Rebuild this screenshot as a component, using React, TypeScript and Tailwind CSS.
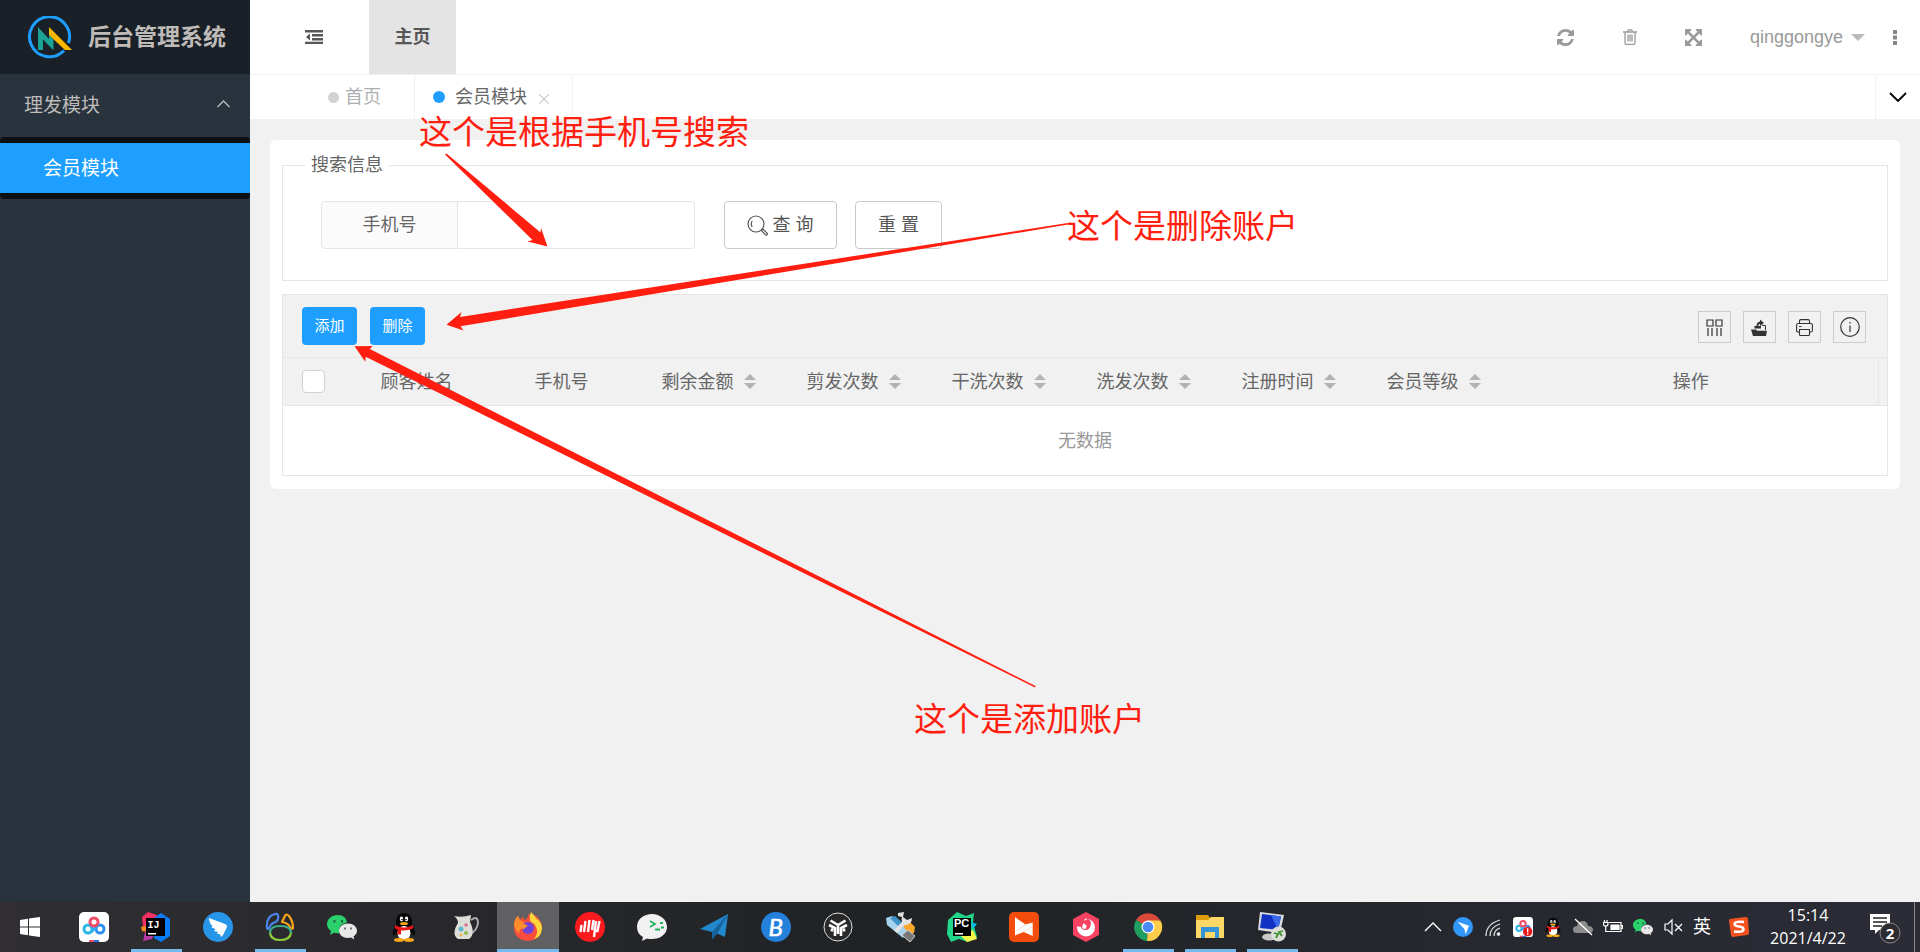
import type { ReactNode } from "react";

const columns = [
  { title: "顾客姓名", sortable: false },
  { title: "手机号", sortable: false },
  { title: "剩余金额", sortable: true },
  { title: "剪发次数", sortable: true },
  { title: "干洗次数", sortable: true },
  { title: "洗发次数", sortable: true },
  { title: "注册时间", sortable: true },
  { title: "会员等级", sortable: true },
];

function Logo() {
  return (
    <svg className="h-11 w-[46px] shrink-0" viewBox="0 0 46 44" fill="none">
      <path d="M42.5 27A20 20 0 1 0 38 34.5" stroke="#1e9fff" strokeWidth="3" />
      <path d="M12 11l11 12v-4l4.500 4.500v11L17 23.500v10.500h-5z" fill="#1aa294" />
      <path d="M23 11l23 23h-7L23 19z" fill="#ffb800" />
    </svg>
  );
}

function OutdentIcon() {
  return (
    <svg width="18" height="14" viewBox="0 0 18 14" fill="#565656">
      <path d="M0 0h18v2.500H0zM7 4h11v2.500H7zM7 8h11v2.500H7zM0 11.700h18V14H0zM5 3.500v7L1 7z" />
    </svg>
  );
}

function RefreshIcon() {
  return (
    <svg width="17" height="17" viewBox="0 0 1536 1536" fill="#999">
      <path d="M1511 928q0 5-1 7-64 268-268 434.5t-478 166.5q-146 0-282.500-55t-243.500-157l-129 129q-19 19-45 19t-45-19-19-45v-448q0-26 19-45t45-19h448q26 0 45 19t19 45-19 45l-137 137q71 66 161 102t187 36q134 0 250-65t186-179q11-17 53-117 8-23 30-23h192q13 0 22.500 9.500t9.500 22.500zm25-800v448q0 26-19 45t-45 19h-448q-26 0-45-19t-19-45 19-45l138-138q-148-137-349-137-134 0-250 65t-186 179q-11 17-53 117-8 23-30 23h-199q-13 0-22.500-9.500t-9.500-22.500v-7q65-268 270-434.500t480-166.500q146 0 284 55.500t245 156.500l130-129q19-19 45-19t45 19 19 45z" />
    </svg>
  );
}

function TrashIcon() {
  return (
    <svg width="14" height="16" viewBox="0 0 14 16" fill="none" stroke="#999" strokeWidth="1.300">
      <path d="M0 3h14M4.500 3l.800-2.200h3.400L9.500 3M2 3v11q0 1.300 1.200 1.300h7.600q1.200 0 1.200-1.300V3M5 5.500v7M7 5.500v7M9 5.500v7" />
    </svg>
  );
}

function ExpandIcon() {
  return (
    <svg width="17" height="17" viewBox="128 128 1536 1536" fill="#999">
      <path d="M1411 541l-355 355 355 355 144-144q29-31 70-14 39 17 39 59v448q0 26-19 45t-45 19h-448q-42 0-59-40-17-39 14-69l144-144-355-355-355 355 144 144q31 30 14 69-17 40-59 40h-448q-26 0-45-19t-19-45v-448q0-42 40-59 39-17 69 14l144 144 355-355-355-355-144 144q-19 19-45 19-12 0-24-5-40-17-40-59v-448q0-26 19-45t45-19h448q42 0 59 40 17 39-14 69l-144 144 355 355 355-355-144-144q-31-30-14-69 17-40 59-40h448q26 0 45 19t19 45v448q0 42-39 59-13 5-25 5-26 0-45-19z" />
    </svg>
  );
}

function Sidebar() {
  return (
    <aside className="w-[250px] shrink-0 bg-[#28333e]">
      <div className="flex h-[74px] items-center gap-4 bg-[#192027] pt-0.5 pl-[26px] text-[#bfbbb9]">
        <Logo />
        <h1 className="text-[23px] font-bold whitespace-nowrap">后台管理系统</h1>
      </div>
      <nav>
        <button className="flex h-[63px] w-full items-center justify-between pr-5 pl-6 text-[19px] text-[#bfbbb9]">
          理发模块
          <svg className="mb-1" width="13" height="8" viewBox="0 0 13 8" fill="none" stroke="#bfbbb9" strokeWidth="1.300">
            <path d="M.500 7L6.500 1l6 6" />
          </svg>
        </button>
        <div className="rounded-sm bg-[#0c0f13] py-1.5">
          <a href="#member" className="flex h-[50px] items-center bg-[#1e9fff] pt-0.5 pl-[43px] text-[19px] text-white">
            会员模块
          </a>
        </div>
      </nav>
    </aside>
  );
}

function Header() {
  return (
    <header className="flex h-[74px] items-center justify-between bg-white">
      <div className="flex h-full">
        <button aria-label="收起菜单" className="flex w-[119px] items-center justify-center pl-2">
          <OutdentIcon />
        </button>
        <a href="#main" className="flex w-[87px] items-center justify-center bg-[#e4e4e4] font-bold text-[#565656]">
          主页
        </a>
      </div>
      <div className="flex items-center pr-[19px] text-[#999]">
        <button aria-label="刷新" className="flex w-16 justify-center">
          <RefreshIcon />
        </button>
        <button aria-label="清理" className="flex w-16 justify-center">
          <TrashIcon />
        </button>
        <button aria-label="全屏" className="flex w-16 justify-center">
          <ExpandIcon />
        </button>
        <button className="ml-6 flex items-center gap-2">
          qinggongye
          <svg width="14" height="7" viewBox="0 0 14 7" fill="#bbb">
            <path d="M0 0h14L7 7z" />
          </svg>
        </button>
        <button aria-label="更多" className="ml-5 flex w-4 justify-center">
          <svg className="ml-1" width="4" height="15" viewBox="0 0 4 15" fill="#888">
            <path d="M0 0h4v4H0zM0 5.500h4v4H0zM0 11h4v4H0z" />
          </svg>
        </button>
      </div>
    </header>
  );
}

function TabBar() {
  return (
    <div className="flex h-[45px] items-stretch border-t border-[#f1f1f1] bg-white">
      <div className="w-[50px]" />
      <button className="flex w-[115px] items-center gap-1.5 border-r border-[#f1f1f1] pl-7 text-[#acafb1]">
        <span className="size-[11px] rounded-full bg-[#d2d2d2]" />
        首页
      </button>
      <div className="flex w-[158px] items-center border-r border-[#f1f1f1] pl-[18px] text-[#666]">
        <span className="size-3 rounded-full bg-[#1e9fff]" />
        <span className="ml-2.5">会员模块</span>
        <button aria-label="关闭" className="mt-1 ml-3">
          <svg width="10" height="10" viewBox="0 0 10 10" stroke="#c8c8c8" strokeWidth="1.200">
            <path d="M0 0l10 10M10 0L0 10" />
          </svg>
        </button>
      </div>
      <div className="flex-1" />
      <button aria-label="更多标签" className="flex w-[45px] items-center justify-center border-l border-[#f1f1f1]">
        <svg width="18" height="10" viewBox="0 0 18 10" fill="none" stroke="#000" strokeWidth="1.800">
          <path d="M1 1l8 8 8-8" />
        </svg>
      </button>
    </div>
  );
}

function SearchPanel() {
  return (
    <fieldset className="h-[130px] border border-[#e6e6e6] px-[38px]">
      <legend className="-ml-4 px-1.5 leading-7">搜索信息</legend>
      <form className="mt-[22px] flex">
        <label htmlFor="phone" className="flex h-12 w-[137px] items-center justify-center rounded-l-sm border border-[#e6e6e6] bg-[#fbfbfb]">
          手机号
        </label>
        <input id="phone" type="text" className="h-12 w-[237px] rounded-r-sm border border-l-0 border-[#e6e6e6] bg-white px-3 outline-none" />
        <button type="button" className="ml-[29px] flex h-12 w-[113px] items-center justify-center gap-1 rounded-sm border border-[#c9c9c9] bg-white text-[#555]">
          <svg width="21" height="21" viewBox="0 0 21 21" fill="none" stroke="#555" strokeWidth="1.200">
            <circle cx="9" cy="9" r="8" />
            <path d="M5.200 12Q3.300 9 5.200 6M14.500 15.500l1.500-1.500 4.200 4.300q.5 1-.4 1.600-.8.500-1.300 0z" />
          </svg>
          查 询
        </button>
        <button type="reset" className="ml-[18px] h-12 w-[87px] rounded-sm border border-[#c9c9c9] bg-white text-[#555]">
          重 置
        </button>
      </form>
    </fieldset>
  );
}

function ToolButton({ label, children }: { label: string; children: ReactNode }) {
  return (
    <button aria-label={label} className="flex h-8 w-[33px] items-center justify-center border border-[#ccc]">
      {children}
    </button>
  );
}

function TableToolbar() {
  return (
    <div className="flex h-[62px] items-center justify-between bg-[#f1f1f1] pr-[21px] pl-[19px]">
      <div className="flex gap-[13px] text-[15px] text-white">
        <button className="h-[38px] w-[55px] rounded-sm bg-[#1e9fff]">添加</button>
        <button className="h-[38px] w-[55px] rounded-sm bg-[#1e9fff]">删除</button>
      </div>
      <div className="flex gap-3 pt-0.5">
        <ToolButton label="筛选列">
          <svg width="17" height="17" viewBox="0 0 17 17" fill="none" stroke="#333" strokeWidth="1.200">
            <path d="M1 1h6v6H1zM10 1h6v6h-6zM2 9v8M6 9v8M11 9v8M15 9v8" />
          </svg>
        </ToolButton>
        <ToolButton label="导出">
          <svg width="17" height="17" viewBox="0 0 17 17" fill="#333">
            <path d="M0 10.500h5l1 1.200h10L15 17H2z" />
            <path d="M3.500 9.500V7h2v-.8Q6 3 9 2.500V.500L13 4 9 7V5Q7.300 5 7.200 7H10v2.500z" />
            <path d="M11 6.500h3.500V11" fill="none" stroke="#333" />
          </svg>
        </ToolButton>
        <ToolButton label="打印">
          <svg width="17" height="17" viewBox="0 0 17 17" fill="none" stroke="#333" strokeWidth="1.100">
            <path d="M3.500 4V2q0-1.400 1.400-1.400h7.200q1.400 0 1.400 1.400v2M3.500 13H2.200Q.600 13 .600 11.500V6Q.600 4.500 2.200 4.500h12.600q1.600 0 1.600 1.500v5.500q0 1.500-1.600 1.500h-1.300M3.500 10.500h10v5q0 1-1 1h-8q-1 0-1-1zM3 7.500h2.500" />
          </svg>
        </ToolButton>
        <ToolButton label="提示">
          <svg width="20" height="20" viewBox="0 0 20 20" fill="none" stroke="#333" strokeWidth="1.200">
            <circle cx="10" cy="10" r="9.300" />
            <path d="M10 8.500V15M10 5v1.600" />
          </svg>
        </ToolButton>
      </div>
    </div>
  );
}

function MemberTable() {
  return (
    <section className="mt-[13px] border border-[#e6e6e6]">
      <TableToolbar />
      <table className="w-full table-fixed border-collapse">
        <thead>
          <tr className="h-12 border-y border-[#e6e6e6] bg-[#f1f1f1]">
            <th className="w-[61px] pl-[19px] text-left">
              <input type="checkbox" aria-label="全选" className="block size-[23px] appearance-none rounded-sm border border-[#d2d2d2] bg-white" />
            </th>
            {columns.map((column) => (
              <th key={column.title} className="w-[145px] font-normal">
                {column.sortable ? (
                  <span className="flex items-center justify-center gap-2.5 pl-1">
                    {column.title}
                    <svg width="12" height="15" viewBox="0 0 12 15" fill="#b2b2b2">
                      <path d="M0 6L6 0l6 6zM0 9h12l-6 6z" />
                    </svg>
                  </span>
                ) : (
                  column.title
                )}
              </th>
            ))}
            <th className="font-normal">操作</th>
            <th className="w-[9px] border-l border-[#e6e6e6]" />
          </tr>
        </thead>
        <tbody>
          <tr>
            <td colSpan={11} className="h-[69px] pt-0.5 text-center text-[#999]">无数据</td>
          </tr>
        </tbody>
      </table>
    </section>
  );
}

/* Red notes drawn over the page */
function Annotations() {
  return (
    <div className="pointer-events-none absolute inset-0 text-[33px] leading-10 whitespace-nowrap text-[#ff1e10]">
      <svg className="absolute top-0 left-0" width="1200" height="720" viewBox="0 0 1200 720" fill="#ff1e10">
        <path d="M445 154.500L532.500 240l-5 1.500L547.500 246.500 541 228l-.5 4.500L446.500 153.500z" />
        <path d="M1071 222.500L460 317l1.500-5L446.500 324.700l17 5.700-3-4.200L1071 224z" />
        <path d="M1035 687.500L365.700 356.700l-.400 5L354.500 346.200l18-.200-2.700 3L1035.500 686z" />
      </svg>
      <p className="absolute top-[113px] left-[419px]">这个是根据手机号搜索</p>
      <p className="absolute top-[207px] left-[1067px]">这个是删除账户</p>
      <p className="absolute top-[700px] left-[914px]">这个是添加账户</p>
    </div>
  );
}

function WeChatIcon() {
  return (
    <>
      <path d="M11 3C4.500 3 0 7 0 12c0 3 1.500 5.200 4 7l-1 4 4-2.200q2 .6 5 .400Q11 12 20 10.500C19.500 6 16 3 11 3z" fill="#2bd06c" />
      <path d="M21 11.500c-5 0-9 3.200-9 7.300s4 7.200 9 7.200q1.500 0 3-.4l3.300 1.900-.8-3c2.100-1.300 3.500-3.300 3.500-5.700 0-4.100-4-7.300-9-7.300z" fill="#e8e8e8" />
      <path d="M6.500 8h2v2.500h-2zM14 8h2v2.500h-2z" fill="#176b38" />
      <path d="M17 15.500h2v2h-2zM23 15.500h2v2h-2z" fill="#777" />
    </>
  );
}

function QqIcon() {
  return (
    <>
      <path d="M5 24Q2 20 7 14V9Q8 1 15 1t8 8v5q5 6 2 10l-2-3q-3 7-8 7t-8-7z" fill="#080808" />
      <ellipse cx="15" cy="21" rx="6.500" ry="7" fill="#fff" />
      <path d="M6 13q9 5 18 0v3.500q-6 2.500-12 2v4H8.500v-5L6 16.500z" fill="#e81818" />
      <ellipse cx="12.500" cy="7" rx="1.700" ry="2.400" fill="#fff" />
      <ellipse cx="17.500" cy="7" rx="1.700" ry="2.400" fill="#fff" />
      <circle cx="13" cy="7.500" r=".8" />
      <circle cx="17" cy="7.500" r=".8" />
      <ellipse cx="15" cy="11.500" rx="4" ry="1.600" fill="#f9a71a" />
      <ellipse cx="10" cy="28" rx="5" ry="1.900" fill="#f9a71a" />
      <ellipse cx="20" cy="28" rx="5" ry="1.900" fill="#f9a71a" />
    </>
  );
}

function NetdiskIcon() {
  return (
    <>
      <rect width="30" height="30" rx="5" fill="#fff" />
      <circle cx="9" cy="17" r="4" fill="none" stroke="#2ab7e8" strokeWidth="3" />
      <circle cx="21" cy="17" r="4" fill="none" stroke="#2a8ff0" strokeWidth="3" />
      <path d="M12 20l7-7" stroke="#26b3ee" strokeWidth="3" />
      <circle cx="15" cy="10" r="4" fill="none" stroke="#f04b68" strokeWidth="3" />
      <path d="M10 28h5v2h-5z" fill="#f04b68" />
      <path d="M15 28h5v2h-5z" fill="#2870e8" />
    </>
  );
}

function DingIcon() {
  return (
    <>
      <circle cx="15" cy="15" r="15" fill="#2896e8" />
      <path d="M6 6l16 6q3 1.500 1.500 4L20 23l-2 2-1-3h-3l1-2-4-1 1.500-2-4-1.500 1-1.500Q6 11 6 6z" fill="#fff" />
    </>
  );
}

interface TaskApp {
  name: string;
  state?: "running" | "active";
  art: ReactNode;
}

const apps: TaskApp[] = [
  { name: "百度网盘", art: <NetdiskIcon /> },
  {
    name: "IntelliJ IDEA",
    state: "running",
    art: (
      <>
        <path d="M1 5L7 0l9 3-4 20-9 6 3-8-4-7z" fill="#f72f63" />
        <path d="M0 15l7-2v7l-6-1z" fill="#fb8a24" />
        <path d="M2 29l2-9 9 2-2 5z" fill="#b83ba8" />
        <path d="M20 1l9 6v17l-9 6-7-4V6z" fill="#0a7cf8" />
        <path d="M5 6h19v18H5z" fill="#000" />
        <path d="M7 21h8v1.500H7z" fill="#fff" />
        <text x="6.500" y="15.500" fontSize="10" fontWeight="700" fontFamily="Liberation Mono, monospace" fill="#fff">IJ</text>
      </>
    ),
  },
  { name: "钉钉", art: <DingIcon /> },
  {
    name: "Navicat",
    state: "running",
    art: (
      <g fill="none" strokeWidth="2.200" strokeLinejoin="round">
        <path d="M2 16Q1 4 10 2q4-1 3 5-1 3-5 4-3 2-4 5-1 2-2 0z" stroke="#4a86ee" />
        <path d="M17 10l3-6q1-3 4 0 4 5 4 12-1 2-3-1-2-4-8-5z" stroke="#f6a51c" />
        <path d="M5 21q0-7 10-7 11 0 11 7" stroke="#3dae8b" />
        <path d="M5 21q1 7 10 7 10 0 11-7" stroke="#8ac83b" />
      </g>
    ),
  },
  { name: "微信", art: <WeChatIcon /> },
  { name: "QQ", art: <QqIcon /> },
  {
    name: "水壶",
    art: (
      <>
        <path d="M20 8q7-5 7 3-1 8-8 11" fill="none" stroke="#aaa" strokeWidth="2" />
        <path d="M3 4q8 2 17-1l-1 7q6 12-1 17H7q-7-5 0-16Q7 7 3 4z" fill="#deded9" />
        <circle cx="10" cy="17" r="2.500" fill="#62b8d0" />
        <circle cx="15" cy="13" r="1.800" fill="#dd7496" />
        <circle cx="15" cy="21" r="2" fill="#8dbb55" />
        <circle cx="10" cy="23" r="1.500" fill="#e8b949" />
      </>
    ),
  },
  {
    name: "Firefox",
    state: "active",
    art: (
      <>
        <path d="M1 12q1-6 4-8l2 4 3-4 1 4q4-1 5-7l3 5 3-3q7 5 7 13-1 12-14 13Q2 28 1 17z" fill="#fb4d3d" />
        <path d="M18 0q3 3 5 6 6 4 6 11-1 8-8 10 5-6 2-12-2-4-6-6-1-5 1-9z" fill="#ffd63c" />
        <path d="M1 12q1-6 4-8l2 4 5 3-1 4q-5 2-5 7-4-4-5-10z" fill="#ff8c27" />
        <circle cx="15" cy="16" r="6" fill="#6f42d9" />
        <path d="M9 13q3-2 6 1-3 1-5 4-1-2-1-5z" fill="#ff9428" />
      </>
    ),
  },
  {
    name: "墨刀",
    art: (
      <>
        <circle cx="15" cy="15" r="15" fill="#fa1b1f" />
        <path d="M6.500 13l-1 7M10.500 9l-1.500 11M14.500 8l-1.500 12M18.500 8L17 18M24.500 9l-2 10h-4M21 9l-2 16" stroke="#fff" strokeWidth="2.400" fill="none" />
      </>
    ),
  },
  {
    name: "微信开发者工具",
    art: (
      <>
        <path d="M15 2C7 2 0 7 0 15q0 7 6 10l-1 4 5-2.500q2 .5 5 .5c8 0 15-4.500 15-12S23 2 15 2z" fill="#f1f1f1" />
        <path d="M13 9l5 3-5 3M18 17.500h5M23 11h3M24 15.500h3" fill="none" stroke="#1eb35c" strokeWidth="1.800" />
      </>
    ),
  },
  {
    name: "纸飞机",
    art: (
      <>
        <path d="M1 17L29 2l-3 23-9-4z" fill="#2387cb" />
        <path d="M13 20L29 2l-11 20-5 6z" fill="#15619a" />
      </>
    ),
  },
  {
    name: "Bing",
    art: (
      <>
        <circle cx="15" cy="15" r="15" fill="#2381dc" />
        <text x="7.500" y="23.500" fontSize="24" fontStyle="italic" fontFamily="Lato, sans-serif" fill="#fff" stroke="#fff" strokeWidth=".6">B</text>
      </>
    ),
  },
  {
    name: "Y",
    art: (
      <>
        <circle cx="15" cy="15" r="14" fill="#292929" stroke="#ddd" />
        <path d="M7.500 8.500l7.500 4.500 7.500-4.500M6 13l6 3v8M24 13l-6 3v8M15 14v8M9 16.500v3M21 16.500v3" fill="none" stroke="#fff" strokeWidth="2.600" />
      </>
    ),
  },
  {
    name: "USB",
    art: (
      <>
        <path d="M1 6l6-2 17 14-6 8L2 13z" fill="#a5d2ed" />
        <path d="M5 6l5-2 10 9-4 4z" fill="#3f93c9" />
        <path d="M18 14l7-4 5 5-1 6-5 1z" fill="#f7a62a" />
        <path d="M13 1l6-1-1 5 4 3 5-2q0 7-7 7l-8 8-3-3 8-8q-1-3 0-5l-4-1z" fill="#e2e2e2" />
        <path d="M17 23l6-5 7 6-5 6z" fill="#777" stroke="#d0d0d0" />
      </>
    ),
  },
  {
    name: "PyCharm",
    art: (
      <>
        <path d="M1 8l9-8 9 4 8-3-1 10 4 14-9 5-9-3-8 3-4-8z" fill="#21d789" />
        <path d="M24 10l6 2-4 5z" fill="#0bb9ea" />
        <path d="M14 24l12-6 4 9-10 3z" fill="#f5f54a" />
        <path d="M6 6h18v18H6z" fill="#000" />
        <path d="M8 21h8v1.500H8z" fill="#fff" />
        <text x="7" y="15" fontSize="11" fontWeight="700" fontFamily="Liberation Sans, sans-serif" fill="#fff">PC</text>
      </>
    ),
  },
  {
    name: "向日葵",
    art: (
      <>
        <rect width="30" height="30" rx="5" fill="#f34c0d" />
        <path d="M6 5.300l10.500 7.200 7.200-2V24l-9-4L6 23.500z" fill="#fff" />
        <path d="M16.500 12.500l-9 6.500M15 20l8-5" stroke="#f9c4a8" strokeWidth=".6" />
      </>
    ),
  },
  {
    name: "漫画",
    art: (
      <>
        <path d="M15 0l13 7v16l-13 7L2 23V7z" fill="#f74262" />
        <circle cx="15" cy="15.500" r="9" fill="#fff" />
        <path d="M5 6l10-1-2 4 4-2.500q3 2 3 5l-1 4q-2 3-5 2.500-3 0-4-3l-5-1z" fill="#f74262" />
        <path d="M12.500 11l3 2.500-.5 3-2.500.5-1.500-2z" fill="#fff" />
      </>
    ),
  },
  {
    name: "Chrome",
    state: "running",
    art: (
      <>
        <path d="M15 15L3 8a14 14 0 0 1 24 0z" fill="#dc4a3c" />
        <path d="M15 15L3 8a14 14 0 0 0 11 21z" fill="#1fa060" />
        <path d="M15 15l-1 14A14 14 0 0 0 27.500 8.500H15z" fill="#fccd4b" />
        <circle cx="15" cy="15" r="6.500" fill="#fff" />
        <circle cx="15" cy="15" r="5.300" fill="#4a8af4" />
      </>
    ),
  },
  {
    name: "文件资源管理器",
    state: "running",
    art: (
      <>
        <path d="M1 3h12l2 3h14v4H1z" fill="#dc9c0c" />
        <path d="M1 8h12l3-3h13v21H1z" fill="#ffd766" />
        <path d="M6 26V15h18v11h-4v-6H10v6z" fill="#3694d8" />
      </>
    ),
  },
  {
    name: "远程桌面",
    state: "running",
    art: (
      <>
        <ellipse cx="12" cy="25" rx="7" ry="3.500" fill="#c8c8c8" />
        <path d="M3 0l24 3-4 18-22-3z" fill="#d7dbe0" />
        <path d="M5 2l19 2.500L21 18 3 16z" fill="#1232c3" />
        <path d="M14 3l10 1.500L21 18z" fill="#3b67e8" />
        <circle cx="21.500" cy="22" r="7.500" fill="#deded9" />
        <path d="M17 21l4 1-2 4M26 19l-4 1 3 4" fill="none" stroke="#39922d" strokeWidth="1.800" />
      </>
    ),
  },
];

function TaskButton({ app }: { app: TaskApp }) {
  return (
    <button
      aria-label={app.name}
      className={`flex w-[62px] flex-col items-center justify-between pt-2.5 ${app.state === "active" ? "bg-[#606062]" : ""}`}
    >
      <svg width="30" height="30" viewBox="0 0 30 30">
        {app.art}
      </svg>
      {app.state && <span className={`h-[3px] bg-[#76b9ed] ${app.state === "active" ? "w-full" : "w-[51px]"}`} />}
    </button>
  );
}

function Tray() {
  return (
    <div className="flex items-center text-white">
      <div className="flex items-center gap-2.5">
        <svg width="20" height="20" viewBox="0 0 20 20" fill="none" stroke="#fff" strokeWidth="1.300">
          <path d="M2 14l8-8 8 8" />
        </svg>
        <svg width="20" height="20" viewBox="0 0 30 30">
          <circle cx="15" cy="15" r="15" fill="#3296fa" />
          <path d="M7 7l17 6-5 13-2-8z" fill="#fff" />
        </svg>
        <svg width="20" height="20" viewBox="0 0 20 20" fill="none" stroke="#ddd" strokeWidth="1.300">
          <path d="M3 19Q3 7 17 3M7 19Q7 10 17 7M11 19q0-6 6-8" />
          <circle cx="15.500" cy="17" r="1.200" fill="#fff" />
        </svg>
        <svg width="20" height="20" viewBox="0 0 30 30">
          <NetdiskIcon />
          <circle cx="22" cy="22" r="7" fill="#e81818" />
          <path d="M22 17v6M22 24.500v2" stroke="#fff" strokeWidth="2" />
        </svg>
        <svg width="20" height="20" viewBox="0 0 30 30">
          <QqIcon />
        </svg>
        <svg width="20" height="20" viewBox="0 0 20 20">
          <path d="M4 16q-4 0-4-3.500T4 9q1-5 6-5 4 0 5 5 5 0 5 3.500T16 16z" fill="#8c8c8c" />
          <path d="M2 2l17 16" stroke="#fff" strokeWidth="1.300" />
        </svg>
        <svg width="20" height="20" viewBox="0 0 20 20" fill="none" stroke="#fff" strokeWidth="1.200">
          <path d="M6 5.500h12v9H6M18.500 8.500h1v3h-1" />
          <path d="M8 8h8v4.500H8z" fill="#fff" />
          <path d="M1.500 3v2.500M4 3v2.500M.500 5.500H5V7Q5 9 2.700 9T.500 7zM2.700 9v5.500H6" />
        </svg>
        <svg width="20" height="20" viewBox="0 0 30 30">
          <WeChatIcon />
        </svg>
        <svg width="20" height="20" viewBox="0 0 20 20" fill="none" stroke="#fff" strokeWidth="1.200">
          <path d="M2 7h3l4-4v14l-4-4H2zM12 7l7 7M19 7l-7 7" />
        </svg>
        <span className="w-5 text-lg">英</span>
      </div>
      <svg className="ml-[15px]" width="22" height="22" viewBox="0 0 22 22">
        <path d="M2 3q6-1 16-2 2 0 2 2l1 14q0 2-2 2L5 21q-2 0-2-2L1 5q0-2 1-2z" fill="#f4511e" />
        <path d="M16 6Q7 5 6.500 8q0 2 4.500 2.500t4.500 3Q15 16.500 6 15.500" fill="none" stroke="#fff" strokeWidth="2.500" />
      </svg>
      <div className="ml-4 w-[84px] text-center font-['Open_Sans',sans-serif] text-base leading-[23px]">
        <p>15:14</p>
        <p>2021/4/22</p>
      </div>
      <button aria-label="通知" className="ml-5 pt-0.5">
        <svg width="32" height="32" viewBox="0 0 32 32">
          <path d="M0 2h20v16H9l-4 4v-4H0z" fill="#fff" />
          <path d="M3 6h14M3 10h14M3 14h9" stroke="#222" strokeWidth="1.300" />
          <circle cx="20" cy="21" r="10" fill="#2b2b30" stroke="#888" />
          <text x="20" y="26.500" textAnchor="middle" fontSize="15" fontWeight="700" fontFamily="Open Sans, sans-serif" fill="#fff">2</text>
        </svg>
      </button>
      <div className="ml-3 h-[50px] w-1.5 border-l border-[#8a8a8e]" />
    </div>
  );
}

function Taskbar() {
  return (
    <footer className="flex h-[50px] justify-between bg-linear-to-r from-[#302e32] via-[#202325] via-45% to-[#2b2c36]">
      <div className="flex">
        <button aria-label="开始" className="flex w-[63px] items-center justify-center pr-1">
          <svg width="20" height="20" viewBox="0 0 20 20" fill="#fff">
            <path d="M0 3l8-1.200V9.500H0zM9 1.600L20 0v9.500H9zM0 10.500h8v7.700L0 17zM9 10.500h11V20L9 18.400z" />
          </svg>
        </button>
        {apps.map((app) => (
          <TaskButton key={app.name} app={app} />
        ))}
      </div>
      <Tray />
    </footer>
  );
}

export default function App() {
  return (
    <div className="relative flex min-h-screen flex-col bg-[#f1f1f1] font-['Liberation_Sans','Noto_Sans_CJK_SC',sans-serif] text-lg text-[#666]">
      <div className="flex flex-1">
        <Sidebar />
        <div className="min-w-0 flex-1">
          <Header />
          <TabBar />
          <main className="mx-5 mt-[21px] rounded-md bg-white px-3 pt-[11px] pb-[13px]">
            <SearchPanel />
            <MemberTable />
          </main>
        </div>
      </div>
      <Taskbar />
      <Annotations />
    </div>
  );
}
